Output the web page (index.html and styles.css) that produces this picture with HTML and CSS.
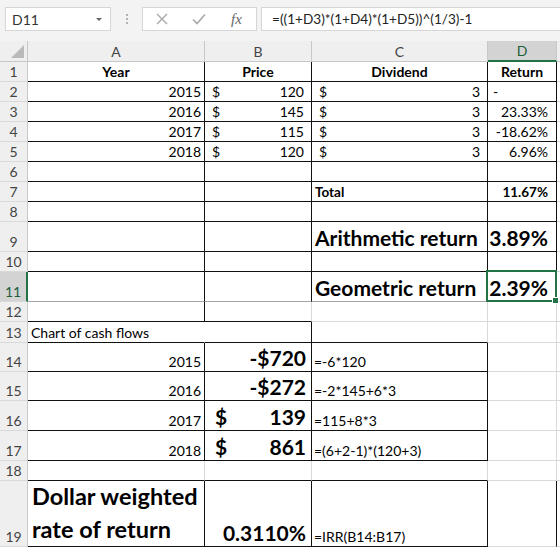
FILE: index.html
```html
<!DOCTYPE html>
<html lang="en">
<head>
    <meta charset="UTF-8">
    <title>Returns</title>
    <link rel="stylesheet" href="styles.css">
</head>
<body>
    <!-- Formula bar -->
    <div class="toolbar">
        <div class="namebox">
            <span>D11</span>
            <span class="caret"></span>
        </div>
        <div class="grip"><i></i><i></i><i></i></div>
        <div class="fxbox">
            <svg width="14" height="14" viewBox="0 0 14 14"><path d="M2 2L12 12M12 2L2 12" stroke="#a8a8a8" stroke-width="1.4" fill="none"/></svg>
            <svg width="16" height="14" viewBox="0 0 16 14"><path d="M2 7.5L6 11.5L14 2.5" stroke="#a8a8a8" stroke-width="1.6" fill="none"/></svg>
            <span class="fx">fx</span>
        </div>
        <div class="formula">=((1+D3)*(1+D4)*(1+D5))^(1/3)-1</div>
    </div>

    <!-- Sheet grid -->
    <div class="sheet">
        <div class="corner"><span class="tri"></span></div>
        <div class="ch">A</div>
        <div class="ch">B</div>
        <div class="ch">C</div>
        <div class="ch on">D</div>
        <div class="ch last"></div>

        <div class="rh">1</div>
        <div class="c br bb ctr b">Year</div>
        <div class="c br bb ctr b">Price</div>
        <div class="c br bb ctr b">Dividend</div>
        <div class="c br bb ctr b">Return</div>
        <div class="c"></div>

        <div class="rh">2</div>
        <div class="c br bb r">2015</div>
        <div class="c br bb acc"><span>$</span><span>120</span></div>
        <div class="c br bb acc"><span>$</span><span>3</span></div>
        <div class="c br bb dash">-</div>
        <div class="c"></div>

        <div class="rh">3</div>
        <div class="c br bb r">2016</div>
        <div class="c br bb acc"><span>$</span><span>145</span></div>
        <div class="c br bb acc"><span>$</span><span>3</span></div>
        <div class="c br bb pct">23.33%</div>
        <div class="c"></div>

        <div class="rh">4</div>
        <div class="c br bb r">2017</div>
        <div class="c br bb acc"><span>$</span><span>115</span></div>
        <div class="c br bb acc"><span>$</span><span>3</span></div>
        <div class="c br bb pct">-18.62%</div>
        <div class="c"></div>

        <div class="rh">5</div>
        <div class="c br bb r">2018</div>
        <div class="c br bb acc"><span>$</span><span>120</span></div>
        <div class="c br bb acc"><span>$</span><span>3</span></div>
        <div class="c br bb pct">6.96%</div>
        <div class="c"></div>

        <div class="rh">6</div>
        <div class="c br bb"></div>
        <div class="c br bb"></div>
        <div class="c br bb"></div>
        <div class="c br bb"></div>
        <div class="c"></div>

        <div class="rh">7</div>
        <div class="c br bb"></div>
        <div class="c br bb"></div>
        <div class="c br bb b small">Total</div>
        <div class="c br bb pct b small">11.67%</div>
        <div class="c"></div>

        <div class="rh">8</div>
        <div class="c br bb"></div>
        <div class="c br bb"></div>
        <div class="c br bb"></div>
        <div class="c br bb"></div>
        <div class="c"></div>

        <div class="rh">9</div>
        <div class="c br bb"></div>
        <div class="c br bb"></div>
        <div class="c br bb big">Arithmetic return</div>
        <div class="c br bb pct big">3.89%</div>
        <div class="c"></div>

        <div class="rh">10</div>
        <div class="c br bb"></div>
        <div class="c br bb"></div>
        <div class="c br bb"></div>
        <div class="c br bb"></div>
        <div class="c"></div>

        <div class="rh on">11</div>
        <div class="c br bg"></div>
        <div class="c br bg"></div>
        <div class="c br bg big">Geometric return</div>
        <div class="c br bg pct big sel">2.39%</div>
        <div class="c"></div>

        <div class="rh">12</div>
        <div class="c br bb"></div>
        <div class="c bb"></div>
        <div class="c"></div>
        <div class="c"></div>
        <div class="c"></div>

        <div class="rh">13</div>
        <div class="c bb open">Chart of cash flows</div>
        <div class="c br bb"></div>
        <div class="c bb"></div>
        <div class="c"></div>
        <div class="c"></div>

        <div class="rh">14</div>
        <div class="c br bb r">2015</div>
        <div class="c br bb r big tight">-$720</div>
        <div class="c br bb note">=-6*120</div>
        <div class="c"></div>
        <div class="c"></div>

        <div class="rh">15</div>
        <div class="c br bb r">2016</div>
        <div class="c br bb r big tight">-$272</div>
        <div class="c br bb note">=-2*145+6*3</div>
        <div class="c"></div>
        <div class="c"></div>

        <div class="rh">16</div>
        <div class="c br bb r">2017</div>
        <div class="c br bb acc big tight"><span>$</span><span>139</span></div>
        <div class="c br bb note">=115+8*3</div>
        <div class="c"></div>
        <div class="c"></div>

        <div class="rh">17</div>
        <div class="c br bb r">2018</div>
        <div class="c br bb acc big tight"><span>$</span><span>861</span></div>
        <div class="c br bb note">=(6+2-1)*(120+3)</div>
        <div class="c"></div>
        <div class="c"></div>

        <div class="rh">18</div>
        <div class="c bb"></div>
        <div class="c bb"></div>
        <div class="c bb"></div>
        <div class="c"></div>
        <div class="c"></div>

        <div class="rh">19</div>
        <div class="c br bb wrap">Dollar weighted<br>rate of return</div>
        <div class="c br bb r big tight">0.3110%</div>
        <div class="c br bb note">=IRR(B14:B17)</div>
        <div class="c br"></div>
        <div class="c"></div>
    </div>
</body>
</html>
```

FILE: styles.css
```css
body {
    margin: 0;
    background: #fff;
    font-family: Lato, "Open Sans", sans-serif;
    font-size: 14px;
    color: #000;
    overflow: hidden;
}
.toolbar {
    height: 41px;
    background: #f3f3f3;
    display: flex;
    align-items: flex-start;
    padding-top: 7px;
    box-sizing: border-box;
}
.namebox {
    margin-left: 5px;
    width: 106px;
    height: 24px;
    background: #fff;
    border: 1px solid #d6d6d6;
    box-sizing: border-box;
    display: flex;
    align-items: center;
    justify-content: space-between;
    padding: 0 8px 0 6px;
    font-size: 14px;
    color: #333;
}
.caret {
    width: 0;
    height: 0;
    border-left: 3px solid transparent;
    border-right: 3px solid transparent;
    border-top: 3px solid #666;
}
.grip {
    width: 31px;
    height: 24px;
    display: flex;
    flex-direction: column;
    align-items: center;
    justify-content: center;
    gap: 2px;
}
.grip i {
    width: 2px;
    height: 2px;
    background: #b0b0b0;
}
.fxbox {
    width: 115px;
    height: 24px;
    background: #fff;
    border: 1px solid #d6d6d6;
    box-sizing: border-box;
    display: flex;
    align-items: center;
    padding-left: 12px;
    gap: 22px;
}
.fx {
    font-family: "Liberation Serif", serif;
    font-style: italic;
    font-size: 15px;
    color: #666;
    margin-left: 2px;
}
.formula {
    margin-left: 4px;
    flex: 1;
    height: 24px;
    background: #fff;
    border: 1px solid #d6d6d6;
    border-right: none;
    box-sizing: border-box;
    padding-left: 10px;
    display: flex;
    align-items: center;
    font-size: 13.6px;
    color: #222;
}
.sheet {
    display: grid;
    grid-template-columns: 28px 177px 107px 176px 69px 3px;
    grid-template-rows: 21px repeat(8, 20px) 30px 20px 30px 20px 21px 29px 29px 30px 30px 20px 66px;
}
.sheet > div {
    box-sizing: border-box;
}
.corner {
    background: #efefef;
    border-right: 1px solid #c8c8c8;
    border-bottom: 1px solid #c8c8c8;
    position: relative;
}
.tri {
    position: absolute;
    right: 3px;
    bottom: 3px;
    width: 0;
    height: 0;
    border-left: 13px solid transparent;
    border-bottom: 13px solid #b9b9b9;
}
.ch {
    background: #efefef;
    border-right: 1px solid #c8c8c8;
    border-bottom: 1px solid #c8c8c8;
    display: flex;
    align-items: center;
    justify-content: center;
    color: #444;
    font-size: 14px;
}
.ch.on {
    background: #d3d3d3;
    border-bottom: 2px solid #217346;
    color: #1d5e3a;
}
.ch.last {
    border-right: none;
}
.rh {
    background: #efefef;
    border-right: 1px solid #c8c8c8;
    border-bottom: 1px solid #d9d9d9;
    display: flex;
    align-items: flex-end;
    justify-content: center;
    padding-bottom: 1px;
    color: #444;
    font-size: 14px;
}
.rh.on {
    background: #d3d3d3;
    border-right: 2px solid #217346;
    color: #1d5e3a;
}
.c {
    border-right: 1px solid #dadada;
    border-bottom: 1px solid #dadada;
    display: flex;
    align-items: flex-end;
    padding: 0 3px 1px 3px;
    white-space: nowrap;
}
.br { border-right-color: #111; }
.bb { border-bottom-color: #111; }
.bg { border-bottom-color: #a6a6a6; }
.open { border-right-color: transparent; }
.r { justify-content: flex-end; }
.ctr { justify-content: center; }
.b { font-weight: bold; }
.acc {
    justify-content: space-between;
    padding-left: 7px;
    padding-right: 7px;
}
.pct {
    justify-content: flex-end;
    padding-right: 8px;
}
.dash { padding-left: 5px; }
.small { font-size: 13.5px; }
.big {
    font-size: 21px;
    font-weight: bold;
    padding-bottom: 1px;
}
.tight { padding-right: 5px; }
.acc.tight { padding-left: 10px; }
.note {
    font-size: 14px;
    padding-left: 2px;
}
.wrap {
    white-space: normal;
    font-size: 23.5px;
    font-weight: bold;
    line-height: 33px;
    padding: 0 3px 0 4px;
}
.sel {
    position: relative;
}
.sel::after {
    content: "";
    position: absolute;
    left: -2px;
    top: -2px;
    right: -1px;
    bottom: -1px;
    border: 2px solid #217346;
}
.sel::before {
    content: "";
    position: absolute;
    right: -3px;
    bottom: -3px;
    width: 5px;
    height: 5px;
    background: #217346;
    border: 1px solid #fff;
    z-index: 1;
}
```
